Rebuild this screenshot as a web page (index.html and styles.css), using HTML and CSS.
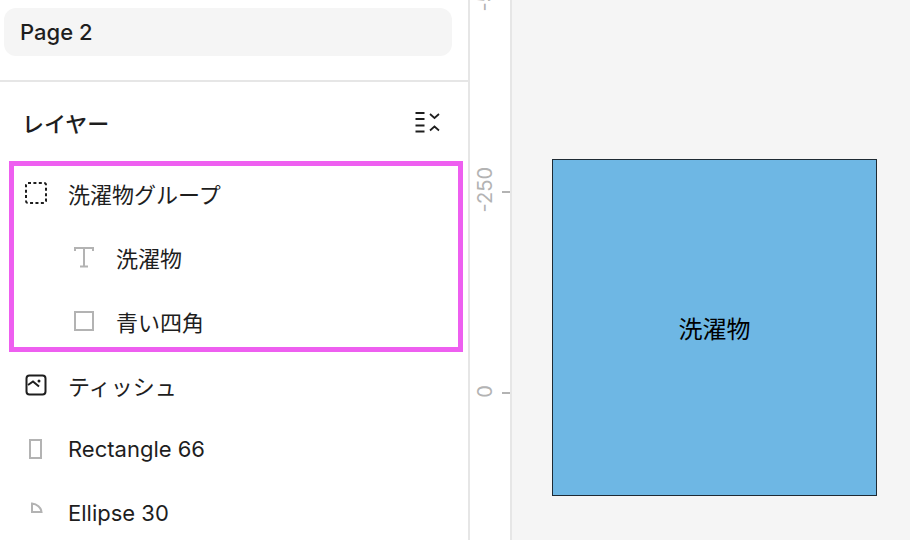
FILE: index.html
```html
<!DOCTYPE html>
<html lang="ja">
<head>
    <meta charset="UTF-8">
    <title>レイヤー</title>
    <link rel="stylesheet" href="styles.css">
</head>
<body>
    <div class="app">
        <div class="sidebar">
            <div class="pages">
                <div class="page-item">Page 2</div>
            </div>
            <div class="layers-header">
                <span class="layers-title">レイヤー</span>
                <svg class="collapse-icon" width="26" height="22" viewBox="0 0 26 22" fill="none" stroke="#1e1e1e">
                    <path d="M0.5 2h9M0.5 8h9M0.5 14.500h9M0.500 20.500h9" stroke-width="2"/>
                    <path d="M15 3l4.500 4 4.500-4M15 19.500l4.500-4 4.500 4" stroke-width="1.700"/>
                </svg>
            </div>
            <div class="layer-group">
                <div class="layer-row">
                    <svg class="layer-icon" width="22" height="22" viewBox="0 0 22 22" fill="none" stroke="#1e1e1e">
                        <rect x="1" y="1" width="20" height="20" rx="2" stroke-width="2" stroke-dasharray="3 2.400"/>
                    </svg>
                    <span>洗濯物グループ</span>
                </div>
                <div class="layer-row child">
                    <svg class="layer-icon" width="22" height="22" viewBox="0 0 22 22" fill="none" stroke="#b3b3b3">
                        <path d="M2 5V2h18v3M11 2v18M7 20.500h8" stroke-width="2"/>
                    </svg>
                    <span>洗濯物</span>
                </div>
                <div class="layer-row child">
                    <svg class="layer-icon" width="22" height="22" viewBox="0 0 22 22" fill="none" stroke="#b3b3b3">
                        <rect x="2" y="2" width="18" height="18" stroke-width="2"/>
                    </svg>
                    <span>青い四角</span>
                </div>
            </div>
            <div class="layer-row">
                <svg class="layer-icon" width="22" height="22" viewBox="0 0 22 22" fill="none" stroke="#1e1e1e">
                    <rect x="1.500" y="1.500" width="19" height="19" rx="3" stroke-width="2"/>
                    <path d="M3 11l5-3.500 6 5" stroke-width="2"/>
                    <circle cx="14" cy="7" r="1.500" fill="#1e1e1e" stroke="none"/>
                </svg>
                <span>ティッシュ</span>
            </div>
            <div class="layer-row">
                <svg class="layer-icon" width="22" height="22" viewBox="0 0 22 22" fill="none" stroke="#b3b3b3">
                    <rect x="5" y="2" width="11" height="18" stroke-width="2"/>
                </svg>
                <span>Rectangle 66</span>
            </div>
            <div class="layer-row">
                <svg class="layer-icon" width="22" height="22" viewBox="0 0 22 22" fill="none" stroke="#b3b3b3">
                    <path d="M7 1.500v8.500h9.500C16 5.500 12 2 7 1.500z" stroke-width="2"/>
                </svg>
                <span>Ellipse 30</span>
            </div>
        </div>
        <div class="ruler">
            <span class="ruler-label label-top">-500</span>
            <span class="ruler-tick tick-250"></span>
            <span class="ruler-label label-250">-250</span>
            <span class="ruler-tick tick-0"></span>
            <span class="ruler-label label-0">0</span>
        </div>
        <div class="canvas">
            <div class="blue-rect">洗濯物</div>
        </div>
    </div>
</body>
</html>
```

FILE: styles.css
```css
* {
    margin: 0;
    padding: 0;
    box-sizing: border-box;
}

body {
    font-family: Inter, 'Noto Sans CJK JP', sans-serif;
    color: #1e1e1e;
    background: #fff;
    overflow: hidden;
}

.app {
    display: flex;
    width: 910px;
    height: 540px;
    overflow: hidden;
}

.sidebar {
    width: 470px;
    flex-shrink: 0;
    border-right: 2px solid #e6e6e6;
    overflow: hidden;
}

.pages {
    height: 82px;
    padding: 8px 16px 0 4px;
    border-bottom: 2px solid #e6e6e6;
}

.page-item {
    height: 48px;
    padding-left: 16px;
    line-height: 48px;
    font-size: 22px;
    font-weight: 500;
    background: #f5f5f5;
    border-radius: 12px;
}

.layers-header {
    height: 79px;
    padding: 0 27px 0 22px;
    display: flex;
    align-items: center;
    justify-content: space-between;
}

.layers-title {
    font-size: 22px;
    font-weight: 500;
}

.layer-group {
    width: 454px;
    height: 191px;
    margin-left: 9px;
    margin-bottom: 1px;
    border: 5px solid #ee5ff0;
}

.layer-group .layer-row {
    height: 64px;
    margin-left: -14px;
    margin-top: -5px;
}

.layer-group .layer-row + .layer-row {
    margin-top: 0;
}

.layer-row {
    height: 64px;
    display: flex;
    align-items: center;
    padding-left: 25px;
    font-size: 22px;
    white-space: nowrap;
}

.layer-row.child {
    padding-left: 73px;
}

.layer-icon {
    flex-shrink: 0;
    margin-right: 21px;
}

.ruler {
    position: relative;
    width: 42px;
    flex-shrink: 0;
    border-right: 2px solid #e6e6e6;
    overflow: hidden;
}

.ruler-label {
    position: absolute;
    left: 3px;
    width: 24px;
    writing-mode: vertical-rl;
    transform: rotate(180deg);
    font-size: 20px;
    line-height: 24px;
    color: #b3b3b3;
}

.label-top {
    bottom: 528px;
}

.label-250 {
    top: 167px;
}

.label-0 {
    top: 385px;
}

.ruler-tick {
    position: absolute;
    left: 32px;
    width: 8px;
    height: 2px;
    background: #b3b3b3;
}

.tick-250 {
    top: 191px;
}

.tick-0 {
    top: 392px;
}

.canvas {
    flex: 1;
    background: #f5f5f5;
    padding: 159px 0 0 40px;
}

.blue-rect {
    width: 325px;
    height: 337px;
    background: #6eb7e4;
    border: 1px solid #1e2a33;
    display: flex;
    justify-content: center;
    padding-top: 150px;
    font-family: 'Noto Sans CJK JP', sans-serif;
    font-size: 24px;
    line-height: 36px;
    color: #000;
}
```
